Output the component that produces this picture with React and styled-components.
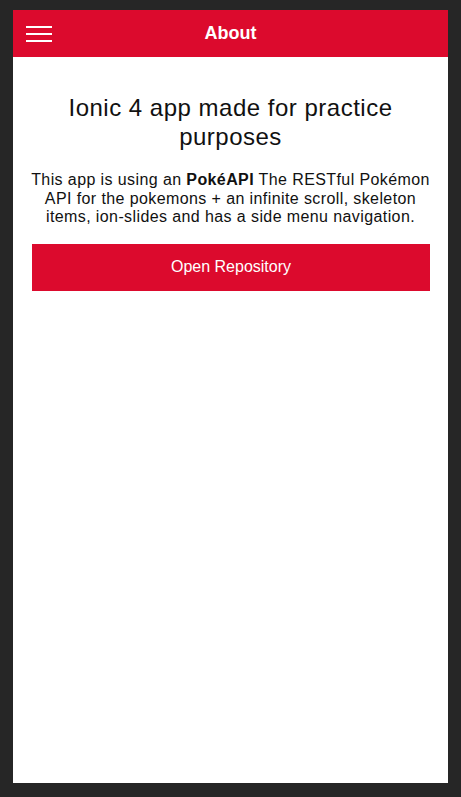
import React from "react";
import styled, { createGlobalStyle } from "styled-components";

const Global = createGlobalStyle`
  html, body { margin: 0; padding: 0; background: #262626; }
  body { font-family: "Liberation Sans", Arial, sans-serif; }
`;

const Device = styled.div`
  box-sizing: border-box;
  margin: 10px 0 0 13px;
  width: 435px;
  height: 773px;
  background: #ffffff;
  display: flex;
  flex-direction: column;
`;

const Toolbar = styled.header`
  height: 47px;
  background: #dc0a2d;
  display: grid;
  grid-template-columns: 56px 1fr 56px;
  align-items: center;
`;

const MenuButton = styled.button`
  border: 0;
  background: none;
  padding: 0 0 0 13px;
  height: 100%;
  display: flex;
  align-items: center;
  cursor: pointer;
`;

const Title = styled.h1`
  margin: 0;
  text-align: center;
  color: #ffffff;
  font-size: 18px;
  font-weight: 700;
`;

const Content = styled.main`
  flex: 1;
  padding: 16px 16px;
  text-align: center;
  color: #111;
`;

const Heading = styled.h2`
  margin: 20px 0 0;
  font-size: 24px;
  font-weight: 400;
  line-height: 29px;
  letter-spacing: 0.5px;
  color: #111;
`;

const Paragraph = styled.p`
  margin: 20px 0 0;
  font-size: 16px;
  line-height: 18.5px;
  letter-spacing: 0.4px;
  color: #111;
  b { font-weight: 700; }
`;

const ActionButton = styled.button`
  display: block;
  box-sizing: border-box;
  width: calc(100% - 5px);
  margin: 17px 2px 0 3px;
  height: 47px;
  border: 0;
  background: #dc0a2d;
  color: #fff;
  font-family: "Liberation Sans", Arial, sans-serif;
  font-size: 16px;
  cursor: pointer;
`;

function MenuIcon() {
  return (
    <svg width="26" height="18" viewBox="0 0 26 18">
      <g stroke="#fff" strokeWidth="2" strokeLinecap="square">
        <line x1="1" y1="2" x2="25" y2="2" />
        <line x1="1" y1="9" x2="25" y2="9" />
        <line x1="1" y1="16" x2="25" y2="16" />
      </g>
    </svg>
  );
}

export default function App() {
  return (
    <>
      <Global />
      <Device>
        <Toolbar>
          <MenuButton aria-label="menu">
            <MenuIcon />
          </MenuButton>
          <Title>About</Title>
          <span />
        </Toolbar>
        <Content>
          <Heading>Ionic 4 app made for practice purposes</Heading>
          <Paragraph>
            This app is using an <b>PokéAPI</b> The RESTful Pokémon API for the
            pokemons + an infinite scroll, skeleton items, ion-slides and has a
            side menu navigation.
          </Paragraph>
          <ActionButton>Open Repository</ActionButton>
        </Content>
      </Device>
    </>
  );
}
